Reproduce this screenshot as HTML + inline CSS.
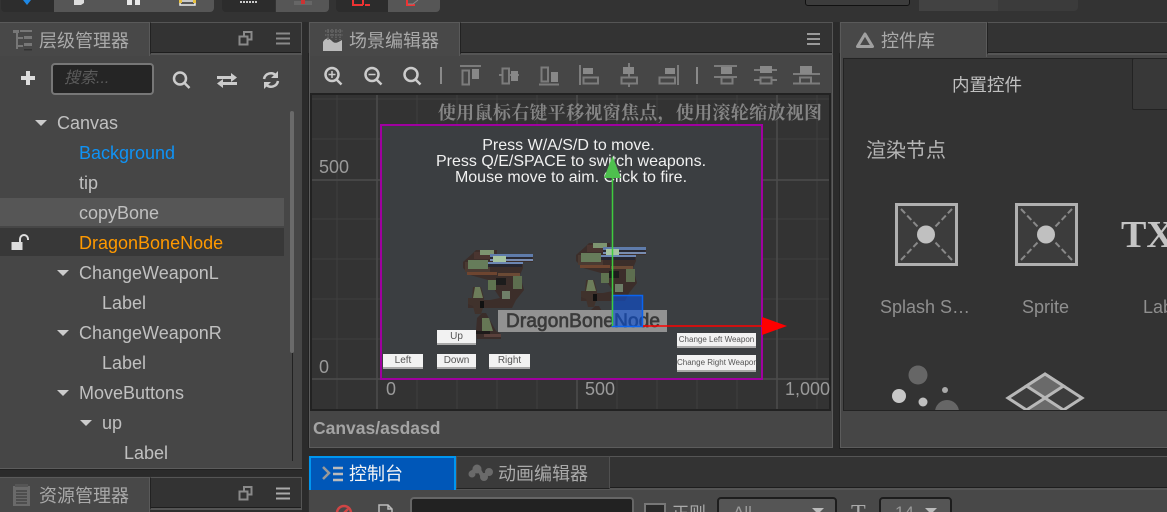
<!DOCTYPE html>
<html><head><meta charset="utf-8">
<style>
html,body{margin:0;padding:0;width:1167px;height:512px;overflow:hidden;background:#2e2e2e}
*{box-sizing:border-box}
body{position:relative;font-family:"Liberation Sans","Noto Sans CJK SC",sans-serif;color:#bbb}
.a{position:absolute}
.t{position:absolute;white-space:nowrap;line-height:30px;height:30px;font-size:18px;color:#c0c0c0}
.tab{position:absolute;background:#484848;border:1px solid #5a5a5a;border-bottom:0}
.strip{position:absolute;background:#333;border:1px solid #555;border-left:1px solid #222;border-bottom:2px solid #555;box-shadow:inset 0 -1px 0 #1e1e1e}
.panel{position:absolute;background:#464646;border:1px solid #5c5c5c;outline:1px solid #222}
.title{position:absolute;white-space:nowrap;font-size:18px;line-height:24px;color:#aaa}
.arr{position:absolute;width:0;height:0;border-left:6px solid transparent;border-right:6px solid transparent;border-top:6px solid #ccc}
.btn{position:absolute;background:#f2f2f2;border-bottom:2px solid #a8a8a8;color:#555;font-size:10px;text-align:center;line-height:14px;white-space:nowrap;overflow:hidden}
svg{position:absolute;display:block}
</style></head><body>

<!-- top toolbar -->
<div class="a" style="left:0;top:0;width:1167px;height:22px;background:#333"></div>
<div class="a" style="left:1px;top:0;width:53px;height:12px;background:#2d2d2d;border-radius:0 0 0 4px"></div>
<div class="a" style="left:54px;top:0;width:160px;height:12px;background:#565656;border-radius:0 0 4px 0"></div>
<div class="a" style="left:222px;top:0;width:53px;height:12px;background:#2c2c2c;border-radius:0 0 0 4px"></div>
<div class="a" style="left:276px;top:0;width:53px;height:12px;background:#565656;border-radius:0 0 4px 0"></div>
<div class="a" style="left:336px;top:0;width:52px;height:12px;background:#2c2c2c;border-radius:0 0 0 4px"></div>
<div class="a" style="left:388px;top:0;width:52px;height:12px;background:#565656;border-radius:0 0 4px 0"></div>
<div class="a" style="left:805px;top:-4px;width:105px;height:10px;background:#3c3c3c;border:1px solid #111;border-radius:3px"></div>
<div class="a" style="left:919px;top:0;width:79px;height:11px;background:#424242"></div>
<div class="a" style="left:998px;top:0;width:80px;height:11px;background:#3b3b3b;border-radius:0 0 4px 0"></div>
<svg style="left:0;top:0" width="450" height="12">
<path d="M23 0h8l-4 5z" fill="#1e88e5"/>
<path d="M74 0h10v3l-3 2h-7z" fill="#ddd"/>
<path d="M127 0h5v5h-5zM135 0h5v5h-5z" fill="#e8e8e8"/>
<path d="M180 1h15v4h-15z" fill="none" stroke="#eee" stroke-width="1.5"/><rect x="179" y="0" width="3" height="3" fill="#e6c040"/><rect x="193" y="0" width="3" height="3" fill="#e6c040"/>
<path d="M240 2h17" stroke="#ccc" stroke-width="2" stroke-dasharray="2 1"/>
<rect x="294" y="1" width="18" height="4" fill="#666"/><rect x="301" y="0" width="4" height="4" fill="#c33"/>
<path d="M353 0v5h10M363 5v-5M370 5h-5" stroke="#e33" stroke-width="2" fill="none"/>
<path d="M407 0v5h8" stroke="#e33" stroke-width="2" fill="none"/><path d="M418 0l-5 4h-5" stroke="#888" fill="none"/>
</svg>

<!-- LEFT: hierarchy panel -->
<div class="panel" style="left:0;top:54px;width:303px;height:415px;border-left:0"></div>
<div class="strip" style="left:150px;top:22px;width:152px;height:33px"></div>
<div class="tab" style="left:-1px;top:22px;width:151px;height:34px"></div>
<svg style="left:12px;top:28px" width="22" height="24" fill="#777">
<path d="M1 2h6v3H1zM8 2h12v2H8zM4 5h2v16H4zM6 9h5v2H6zM6 17h5v2H6zM12 8h8v3h-8zM12 15h8v3h-8z"/>
<rect x="12" y="21" width="8" height="1.5" fill="#333"/></svg>
<div class="title" style="left:39px;top:29px">层级管理器</div>
<svg style="left:238px;top:31px" width="66" height="16" fill="none" stroke="#8a8a8a" stroke-width="2">
<rect x="6" y="1" width="7.500" height="7.500"/><rect x="1.500" y="5.500" width="8" height="8" fill="#333"/>
<path d="M38 2.500h14M38 7.500h14M38 12.500h14"/></svg>

<svg style="left:20px;top:70px" width="16" height="16" fill="#ddd"><path d="M6 1h4v5h5v4h-5v5H6v-5H1V6h5z"/></svg>
<div class="a" style="left:51px;top:63px;width:103px;height:32px;background:#252525;border:2px solid #777;border-radius:4px"></div>
<div class="a" style="left:64px;top:66px;font-size:16px;line-height:26px;color:#5c5c5c;font-style:italic">搜索...</div>
<svg style="left:171px;top:70px" width="20" height="20" fill="none" stroke="#ccc" stroke-width="2.500"><circle cx="9" cy="8.500" r="6"/><path d="M13.500 13l5 5" /></svg>
<svg style="left:216px;top:72px" width="22" height="17" fill="#ccc"><path d="M1 4h14V1l6 4.500-6 4.500V7H1zM21 10H7V7l-6 4.500L7 16v-3h14z"/></svg>
<svg style="left:262px;top:71px" width="18" height="18" fill="none" stroke="#ccc" stroke-width="2.500"><path d="M2 8a7 7 0 0 1 12-3.500M16 10a7 7 0 0 1-12 3.500"/><path d="M16 0v7h-7zM2 18v-7h7z" fill="#ccc" stroke="none"/></svg>

<!-- tree -->
<div class="a" style="left:0;top:198px;width:284px;height:28px;background:#565656"></div>
<div class="a" style="left:0;top:228px;width:284px;height:28px;background:#383838"></div>
<div class="a" style="left:292px;top:111px;width:1px;height:350px;background:#222"></div>
<div class="a" style="left:290px;top:111px;width:4px;height:242px;background:#6a6a6a;border-radius:2px"></div>

<div class="arr" style="left:35px;top:120px"></div>
<div class="t" style="left:57px;top:108px">Canvas</div>
<div class="t" style="left:79px;top:138px;color:#0f93f5">Background</div>
<div class="t" style="left:79px;top:168px">tip</div>
<div class="t" style="left:79px;top:198px">copyBone</div>
<svg style="left:11px;top:234px" width="18" height="16" fill="#ddd"><rect x="0.500" y="8" width="11" height="8"/><path d="M9 8V5a4 4 0 0 1 8 0v1" fill="none" stroke="#ddd" stroke-width="2"/></svg>
<div class="t" style="left:79px;top:228px;color:#f90">DragonBoneNode</div>
<div class="arr" style="left:57px;top:270px"></div>
<div class="t" style="left:79px;top:258px">ChangeWeaponL</div>
<div class="t" style="left:102px;top:288px">Label</div>
<div class="arr" style="left:57px;top:330px"></div>
<div class="t" style="left:79px;top:318px">ChangeWeaponR</div>
<div class="t" style="left:102px;top:348px">Label</div>
<div class="arr" style="left:57px;top:390px"></div>
<div class="t" style="left:79px;top:378px">MoveButtons</div>
<div class="arr" style="left:80px;top:420px"></div>
<div class="t" style="left:102px;top:408px">up</div>
<div class="t" style="left:124px;top:438px">Label</div>

<!-- asset panel -->
<div class="strip" style="left:150px;top:477px;width:152px;height:33px"></div>
<div class="tab" style="left:-1px;top:477px;width:151px;height:40px"></div>
<svg style="left:12px;top:484px" width="20" height="24"><rect x="1" y="2" width="17" height="20" fill="#6a6a6a"/><path d="M4 7h11M4 10h11M4 13h11M4 16h11M4 19h11" stroke="#444" stroke-width="1.500"/><rect x="3" y="0" width="13" height="3" fill="#555"/></svg>
<div class="title" style="left:39px;top:484px">资源管理器</div>
<svg style="left:238px;top:486px" width="66" height="16" fill="none" stroke="#8a8a8a" stroke-width="2">
<rect x="6" y="1" width="7.500" height="7.500"/><rect x="1.500" y="5.500" width="8" height="8" fill="#333"/>
<path d="M38 2.500h14M38 7.500h14M38 12.500h14" stroke="#aaa"/></svg>

<!-- SCENE panel -->
<div class="panel" style="left:309px;top:54px;width:524px;height:394px"></div>
<div class="strip" style="left:460px;top:22px;width:373px;height:33px"></div>
<div class="tab" style="left:309px;top:22px;width:151px;height:34px"></div>
<svg style="left:322px;top:28px" width="22" height="24"><path d="M1 14c3-5 6-4 9-1s5 2 10-1v11H1z" fill="#bbb"/><path d="M6 1v11M10 1v9M14 1v11M18 1v11M3 3h18M3 7h18" stroke="#666" stroke-width="1.500" stroke-dasharray="1.500 1"/></svg>
<div class="title" style="left:349px;top:29px">场景编辑器</div>
<svg style="left:806px;top:32px" width="16" height="14" fill="none" stroke="#9a9a9a" stroke-width="2"><path d="M1 2h13M1 7h13M1 12h13"/></svg>

<!-- scene toolbar, absolute coords -->
<svg style="left:311px;top:56px" width="519" height="37" viewBox="311 56 519 37">
<g fill="none" stroke="#ccc" stroke-width="2.500">
<circle cx="332" cy="74.500" r="6.500"/><path d="M336.500 79.500l5 5"/><path d="M328.500 74.500h7M332 71v7" stroke-width="1.500"/>
<circle cx="372" cy="74.500" r="6.500"/><path d="M376.500 79.500l5 5"/><path d="M368.500 74.500h7" stroke-width="1.500"/>
<circle cx="411" cy="74.500" r="6.500"/><path d="M415.500 79.500l5 5"/>
</g>
<path d="M441 67v17M697 67v17" stroke="#8a8a8a" stroke-width="2"/>
<g stroke="#7c7c7c" stroke-width="2" fill="none">
<path d="M460 66h21"/><rect x="462.500" y="70.500" width="6.500" height="14"/>
<path d="M499 75h20"/><rect x="502.500" y="68.500" width="6.500" height="15" fill="#464646"/>
<path d="M539 84.500h20"/><rect x="541.500" y="67.500" width="6.500" height="14"/>
<path d="M580 65v20"/><rect x="583.500" y="77.500" width="14.500" height="6"/>
<path d="M629 63v24"/><rect x="621.500" y="77.500" width="15.500" height="6" fill="#464646"/>
<path d="M678 65v20"/><rect x="659.500" y="77.500" width="15.500" height="6"/>
<path d="M714 66h23M714 77h23"/><rect x="721.500" y="77.500" width="11" height="6"/>
<path d="M754 70h23M754 80h23"/><rect x="760.500" y="77.500" width="11" height="6" fill="#464646"/>
<path d="M793 74h27M793 83.500h27"/><rect x="800" y="77.500" width="11" height="6"/>
</g>
<g fill="#888">
<rect x="472" y="69" width="7" height="10"/><rect x="511" y="71" width="7" height="10"/><rect x="551" y="72" width="7" height="10"/>
<rect x="583" y="68" width="10" height="6"/><rect x="623" y="67" width="11" height="7"/><rect x="665" y="68" width="10" height="6"/>
<rect x="721" y="67" width="11" height="7"/><rect x="760" y="66" width="12" height="7"/><rect x="800" y="66" width="12" height="8"/>
</g>
</svg>

<!-- viewport -->
<svg style="left:310px;top:93px" width="521" height="318" viewBox="310 93 521 318">
<rect x="310" y="93" width="521" height="318" fill="#333"/>
<g stroke="#3f3f3f" stroke-width="1">
<path d="M337 94v316M417 94v316M457 94v316M497 94v316M537 94v316M617 94v316M657 94v316M697 94v316M737 94v316M817 94v316M311 139h519M311 219h519M311 259h519M311 299h519M311 339h519M311 99h519"/>
</g>
<g stroke="#4c4c4c" stroke-width="1.500"><path d="M377 94v316M577 94v316M777 94v316M311 180h519M311 379h519"/></g>
<rect x="311" y="94" width="519" height="316" fill="none" stroke="#222" stroke-width="2"/>
<rect x="381" y="125" width="381" height="254" fill="#3b3e41" stroke="#a000a0" stroke-width="2"/>
<g font-family="'Liberation Sans',sans-serif" font-size="18" fill="#9a9a9a">
<text x="319" y="173">500</text><text x="319" y="373">0</text>
<text x="386" y="395">0</text><text x="585" y="395">500</text><text x="785" y="395">1,000</text>
</g>
<text x="438" y="119" font-family="'Liberation Serif','Noto Serif CJK SC',serif" font-weight="bold" font-size="18" fill="#858585" textLength="384">使用鼠标右键平移视窗焦点，使用滚轮缩放视图</text>
<g font-family="'Liberation Sans',sans-serif" font-size="16" fill="#f0f0f0" text-anchor="middle">
<text x="568.500" y="150">Press W/A/S/D to move.</text>
<text x="571" y="166">Press Q/E/SPACE to switch weapons.</text>
<text x="571" y="182">Mouse move to aim. Click to fire.</text>
</g>

<defs>
<g id="mech">
<path d="M463 262l9-8 4-4h21v4h36v8h-10v6l-3 7 4 15-8 10-4 8h-44v-8h22l10-2-12-18-18-5-7-7z" fill="#3c2e2a"/>
<path d="M473 287h8l3 11 -1 10 -2 6h-6l-2-8-5-2v-6h4z" fill="#40322c"/>
<path d="M477 318l5-5 4 0 10 18 5 3v5h-24l-1-8z" fill="#3a2d2a"/>
<rect x="465" y="262" width="25" height="10" fill="#4a3a32"/>
<rect x="468" y="260" width="20" height="9" fill="#667c5a"/>
<rect x="474" y="252" width="20" height="7" fill="#4a3530"/>
<rect x="480" y="250" width="14" height="5" fill="#7d9470"/>
<rect x="490" y="254" width="43" height="3" fill="#5f7cab"/><rect x="490" y="257" width="42" height="2" fill="#2a2a33"/><rect x="490" y="259" width="43" height="2" fill="#788cb0"/>
<rect x="488" y="262" width="35" height="2" fill="#6c86b3"/><rect x="488" y="264" width="34" height="3" fill="#262630"/>
<rect x="493" y="256" width="13" height="6" fill="#a5c3a0"/>
<rect x="467" y="272" width="30" height="3" fill="#6e4530"/>
<rect x="498" y="273" width="22" height="3" fill="#6b4a35"/>
<rect x="496" y="278" width="10" height="7" fill="#1c1c1c"/>
<rect x="513" y="276" width="9" height="13" fill="#5d6e4f"/>
<rect x="488" y="280" width="8" height="10" fill="#5f7350"/>
<rect x="502" y="291" width="8" height="8" fill="#6f7f68"/>
<rect x="480" y="301" width="4" height="7" fill="#111"/>
<path d="M475 287l5 0 3 11h-10z" fill="#6d7d5a"/>
<path d="M482 318l7 0 4 13h-11z" fill="#667755"/>
<rect x="476" y="331" width="14" height="3" fill="#1e1a1a"/>
<rect x="484" y="334" width="17" height="3" fill="#5a413c"/>
</g>
</defs>
<use href="#mech"/>
<use href="#mech" transform="translate(113,-7)"/>

<rect x="498" y="310" width="169" height="22" fill="#929292"/>
<text x="506" y="327" font-family="'Liberation Sans',sans-serif" font-size="19" fill="#3a3a3a" stroke="#3a3a3a" stroke-width=".7" textLength="154">DragonBoneNode</text>

<rect x="612.500" y="295.500" width="30" height="31" fill="#0a50d8" fill-opacity=".6" stroke="#0a64f0" stroke-width="1.500"/>
<path d="M612.500 178v148" stroke="#3ecb3e" stroke-width="1.500"/>
<path d="M604 178h17l-8.500-22z" fill="#4ec04e"/>
<path d="M643 326h120" stroke="#f00" stroke-width="1.500"/>
<path d="M762 317v18l25-9z" fill="#f00"/>
</svg>

<div class="btn" style="left:437px;top:330px;width:39px;height:15px">Up</div>
<div class="btn" style="left:383px;top:354px;width:40px;height:15px">Left</div>
<div class="btn" style="left:437px;top:354px;width:39px;height:15px">Down</div>
<div class="btn" style="left:489px;top:354px;width:41px;height:15px">Right</div>
<div class="btn" style="left:677px;top:333px;width:79px;height:15px;font-size:8px">Change Left Weapon</div>
<div class="btn" style="left:677px;top:355px;width:79px;height:17px;font-size:8px;line-height:16px">Change Right Weapon</div>

<div class="a" style="left:313px;top:417px;font-size:17.500px;line-height:22px;font-weight:bold;color:#a4a4a4;white-space:nowrap">Canvas/asdasd</div>

<!-- gaps -->
<div class="a" style="left:302px;top:448px;width:865px;height:8px;background:#2b2b2b"></div>
<div class="a" style="left:302px;top:22px;width:6px;height:490px;background:#2b2b2b"></div>
<div class="a" style="left:833px;top:22px;width:6px;height:426px;background:#2b2b2b"></div>
<div class="a" style="left:0;top:470px;width:302px;height:6px;background:#2b2b2b"></div>

<!-- bottom console -->
<div class="a" style="left:456px;top:456px;width:711px;height:34px;background:#333;border-top:1px solid #555;border-bottom:2px solid #555;box-shadow:inset 0 -1px 0 #1e1e1e"></div>
<div class="a" style="left:456px;top:456px;width:154px;height:33px;background:#3a3a3a;border:1px solid #505050;border-bottom:1px solid #222"></div>
<div class="a" style="left:309px;top:456px;width:147px;height:34px;background:#0057b8;border:2px solid #0096f0;border-bottom:0"></div>
<svg style="left:321px;top:465px" width="24" height="18" fill="none" stroke="#bbb" stroke-width="2.500"><path d="M2 2l6 6-6 6" stroke="#999"/><path d="M12 3h10M12 9h10M12 15h10"/></svg>
<div class="title" style="left:349px;top:462px;color:#f4f4f4">控制台</div>
<svg style="left:468px;top:464px" width="26" height="20" fill="#6a6a6a" stroke="#6a6a6a"><path d="M3 9L10 4l5 9 6-5" fill="none" stroke-width="4"/><circle cx="9" cy="5" r="4"/><circle cx="16" cy="13" r="3.500"/><circle cx="21" cy="8" r="3.500"/><circle cx="4" cy="10" r="3"/></svg>
<div class="title" style="left:498px;top:462px">动画编辑器</div>
<div class="a" style="left:309px;top:490px;width:858px;height:22px;background:#484848"></div>
<svg style="left:334px;top:504px" width="20" height="8" fill="none" stroke="#d04545" stroke-width="2.500"><circle cx="10" cy="9" r="7"/><path d="M6 13l8-8"/></svg>
<svg style="left:378px;top:504px" width="16" height="8" fill="none" stroke="#bbb" stroke-width="1.500"><path d="M1 9V1h9l4 4v5M10 1v4h4"/></svg>
<div class="a" style="left:410px;top:497px;width:224px;height:30px;background:#222;border:2px solid #666;border-radius:4px"></div>
<div class="a" style="left:644px;top:503px;width:22px;height:22px;background:#2a2a2a;border:2px solid #777"></div>
<div class="a" style="left:672px;top:502px;font-size:17px;line-height:24px;color:#aaa">正则</div>
<div class="a" style="left:717px;top:497px;width:120px;height:30px;background:#555;border:2px solid #1d1d1d;border-radius:4px"></div>
<div class="a" style="left:733px;top:503px;font-size:17px;line-height:20px;color:#999">All</div>
<div class="arr" style="left:812px;top:508px;border-top-color:#bbb"></div>
<div class="a" style="left:851px;top:502px;font-family:'Liberation Serif',serif;font-size:24px;line-height:24px;color:#aaa">T</div>
<div class="a" style="left:879px;top:497px;width:73px;height:30px;background:#555;border:2px solid #1d1d1d;border-radius:4px"></div>
<div class="a" style="left:895px;top:503px;font-size:17px;line-height:20px;color:#999">14</div>
<div class="arr" style="left:925px;top:508px;border-top-color:#bbb"></div>

<!-- RIGHT panel -->
<div class="panel" style="left:840px;top:54px;width:340px;height:394px"></div>
<div class="strip" style="left:987px;top:22px;width:190px;height:33px"></div>
<div class="tab" style="left:840px;top:22px;width:147px;height:35px"></div>
<svg style="left:855px;top:31px" width="20" height="18" fill="none" stroke="#a0a0a0" stroke-width="3"><path d="M10 3L17.500 15.500h-15z" stroke-linejoin="round"/></svg>
<div class="title" style="left:881px;top:29px">控件库</div>
<div class="a" style="left:843px;top:58px;width:330px;height:353px;background:#333;border:1px solid #232323"></div>
<div class="a" style="left:1132px;top:58px;width:40px;height:52px;background:#383838;border:1px solid #232323;border-radius:2px"></div>
<div class="a" style="left:952px;top:73px;font-size:17.500px;line-height:24px;color:#c0c0c0;white-space:nowrap">内置控件</div>
<div class="a" style="left:866px;top:137px;font-size:20px;line-height:28px;color:#b5b5b5;white-space:nowrap">渲染节点</div>

<svg style="left:843px;top:190px" width="324" height="220">
<rect x="53.500" y="14.500" width="60" height="60" fill="#3c3c3c" stroke="#b0b0b0" stroke-width="3"/><path d="M58 19l18 19M109 19L91 38M58 70l18-19M109 70L91 51" stroke="#888" stroke-width="2" stroke-dasharray="6 3"/><circle cx="83" cy="44.500" r="9" fill="#c0c0c0"/>
<g transform="translate(120,0)"><rect x="53.500" y="14.500" width="60" height="60" fill="#3c3c3c" stroke="#b0b0b0" stroke-width="3"/><path d="M58 19l18 19M109 19L91 38M58 70l18-19M109 70L91 51" stroke="#888" stroke-width="2" stroke-dasharray="6 3"/><circle cx="83" cy="44.500" r="9" fill="#c0c0c0"/></g>
<text x="278" y="57" font-family="'Liberation Serif',serif" font-weight="bold" font-size="38" fill="#c4c4c4">TX</text>
<text x="37" y="123" font-family="'Liberation Sans',sans-serif" font-size="18" fill="#8f8f8f">Splash S…</text>
<text x="179" y="123" font-family="'Liberation Sans',sans-serif" font-size="18" fill="#8f8f8f">Sprite</text>
<text x="300" y="123" font-family="'Liberation Sans',sans-serif" font-size="18" fill="#8f8f8f">Label</text>
<circle cx="75" cy="185" r="9.500" fill="#666"/><circle cx="56" cy="206" r="7" fill="#c8c8c8"/><circle cx="80" cy="212" r="4.500" fill="#c0c0c0"/><circle cx="102" cy="200" r="3" fill="#aaa"/><circle cx="104" cy="222" r="12" fill="#666"/>
<path d="M202 184l37 24-37 24-37-24z" fill="#3c3c3c" stroke="#b8b8b8" stroke-width="3"/>
<path d="M202 184l18.500 12-18.500 12-18.500-12z" fill="#6a6a6a" stroke="#b8b8b8" stroke-width="3"/>
<path d="M202 208l18.500 12-18.500 12-18.500-12z" fill="#6a6a6a" stroke="#b8b8b8" stroke-width="3"/>
</svg>
</body></html>
